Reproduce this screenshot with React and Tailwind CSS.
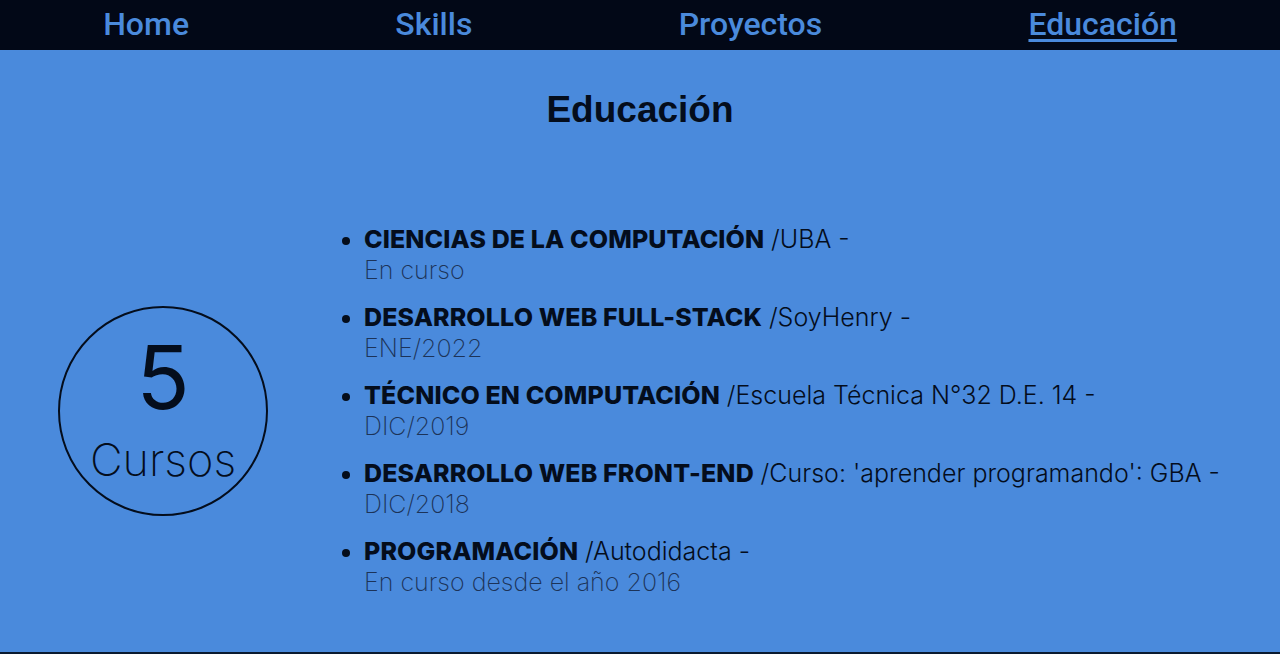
const cursos = [
  { titulo: "CIENCIAS DE LA COMPUTACIÓN", lugar: "/UBA -", fecha: "En curso" },
  { titulo: "DESARROLLO WEB FULL-STACK", lugar: "/SoyHenry -", fecha: "ENE/2022" },
  { titulo: "TÉCNICO EN COMPUTACIÓN", lugar: "/Escuela Técnica N°32 D.E. 14 -", fecha: "DIC/2019" },
  { titulo: "DESARROLLO WEB FRONT-END", lugar: "/Curso: 'aprender programando': GBA -", fecha: "DIC/2018" },
  { titulo: "PROGRAMACIÓN", lugar: "/Autodidacta -", fecha: "En curso desde el año 2016" },
]

export default function App() {
  return (
    <div className="min-h-screen bg-[#0b1a30]">
      {/* Navbar */}
      <nav className="h-[50px] pb-[3px] bg-[#020817] flex justify-around items-center font-['Roboto',sans-serif] text-[32px] font-medium text-[#4a8adc]">
        <a className="leading-none">Home</a>
        <a className="leading-none">Skills</a>
        <a className="leading-none">Proyectos</a>
        <a className="leading-none underline underline-offset-4">Educación</a>
      </nav>

      {/* Educación */}
      <section className="h-[602px] bg-[#4a8adc] flex flex-col">
        <h1 className="pt-[38px] text-center font-['Liberation_Sans',Arial,sans-serif] font-bold text-[37px] leading-[44px] text-[#040d1c]">
          Educación
        </h1>
        <div className="flex-1 flex items-center pl-[58px] pt-[38px] font-['Inter',sans-serif]">
          <div className="w-[210px] h-[210px] shrink-0 rounded-full border-2 border-[#040d1c] flex flex-col items-center justify-center text-[#040d1c]">
            <span className="text-[88px] leading-[80px] font-normal">5</span>
            <span className="text-[45px] leading-[50px] font-extralight pt-[18px]">Cursos</span>
          </div>
          <ul className="ml-[76px] list-disc pl-[20px] flex flex-col gap-[16px] text-[#040d1c] marker:text-[#040d1c]">
            {cursos.map((c) => (
              <li key={c.titulo} className="text-[24px] leading-[31px]">
                <span className="font-extrabold text-[25px] tracking-[0.005em]">{c.titulo}</span>{" "}
                <span className="font-light text-[25px]">{c.lugar}</span>
                <br />
                <span className="font-extralight text-[25px] text-[#1c3358]">{c.fecha}</span>
              </li>
            ))}
          </ul>
        </div>
      </section>
    </div>
  )
}
